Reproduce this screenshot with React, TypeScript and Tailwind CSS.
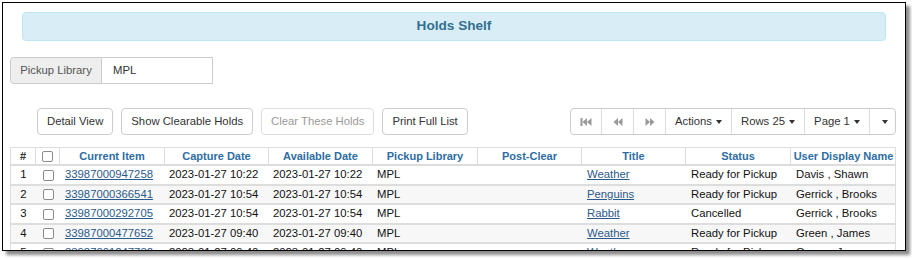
import React from "react";

type Hold = {
  n: number;
  barcode: string;
  capture: string;
  available: string;
  lib: string;
  title: string;
  status: string;
  user: string;
};

const holds: Hold[] = [
  { n: 1, barcode: "33987000947258", capture: "2023-01-27 10:22", available: "2023-01-27 10:22", lib: "MPL", title: "Weather", status: "Ready for Pickup", user: "Davis , Shawn" },
  { n: 2, barcode: "33987000366541", capture: "2023-01-27 10:54", available: "2023-01-27 10:54", lib: "MPL", title: "Penguins", status: "Ready for Pickup", user: "Gerrick , Brooks" },
  { n: 3, barcode: "33987000292705", capture: "2023-01-27 10:54", available: "2023-01-27 10:54", lib: "MPL", title: "Rabbit", status: "Cancelled", user: "Gerrick , Brooks" },
  { n: 4, barcode: "33987000477652", capture: "2023-01-27 09:40", available: "2023-01-27 09:40", lib: "MPL", title: "Weather", status: "Ready for Pickup", user: "Green , James" },
  { n: 5, barcode: "33987001247732", capture: "2023-01-27 09:40", available: "2023-01-27 09:40", lib: "MPL", title: "Weather", status: "Ready for Pickup", user: "Green , James" },
];

const cols = [
  { label: "#", w: "w-[25px]" },
  { label: "", w: "w-[24px]" },
  { label: "Current Item", w: "w-[105px]" },
  { label: "Capture Date", w: "w-[104px]" },
  { label: "Available Date", w: "w-[104px]" },
  { label: "Pickup Library", w: "w-[105px]" },
  { label: "Post-Clear", w: "w-[104px]" },
  { label: "Title", w: "w-[104px]" },
  { label: "Status", w: "w-[105px]" },
  { label: "User Display Name", w: "w-[105px]" },
];

function Box() {
  return <span className="inline-block h-[11px] w-[11px] rounded-[2px] border border-[#8a8a8a] bg-white align-middle" />;
}

function Btn({ children, disabled }: { children: React.ReactNode; disabled?: boolean }) {
  return (
    <button
      className={`h-[27px] rounded-[4px] border bg-white px-[9px] text-[11.3px] ${
        disabled ? "border-[#ddd] text-[#9a9a9a]" : "border-[#ccc] text-[#333]"
      }`}
    >
      {children}
    </button>
  );
}

function Caret() {
  return <span className="ml-[4px] inline-block h-0 w-0 border-x-[3.5px] border-t-[4px] border-x-transparent border-t-[#333] align-middle" />;
}

// pager glyphs: first / prev / next
function PagerIcon({ kind }: { kind: "first" | "prev" | "next" }) {
  return (
    <svg width="12" height="10" viewBox="0 0 12 10" fill="#999">
      {kind === "first" && (
        <>
          <rect x="0.5" y="1" width="2" height="8" />
          <polygon points="7,1 7,9 2.5,5" />
          <polygon points="11.5,1 11.5,9 7,5" />
        </>
      )}
      {kind === "prev" && (
        <>
          <polygon points="6,1 6,9 1.5,5" />
          <polygon points="10.5,1 10.5,9 6,5" />
        </>
      )}
      {kind === "next" && (
        <>
          <polygon points="1.5,1 1.5,9 6,5" />
          <polygon points="6,1 6,9 10.5,5" />
        </>
      )}
    </svg>
  );
}

export default function App() {
  return (
    <div className="h-[259px] w-[912px] overflow-hidden bg-white font-['Liberation_Sans',Arial,sans-serif]">
      <div className="ml-[2px] mt-[2px] h-[249px] w-[904px] overflow-hidden border border-black bg-white shadow-[4px_4px_3px_rgba(0,0,0,0.45)]">
        <div className="px-[7px] pt-[9px]">
          <div className="mx-[12px] flex h-[29px] items-center justify-center rounded-[4px] border border-[#bce8f1] bg-[#d9edf7] text-[13.6px] font-bold text-[#31708f]">
            Holds Shelf
          </div>

          <div className="mt-[16px] flex h-[27px] w-[203px] text-[11.3px]">
            <span className="flex w-[92px] items-center justify-center rounded-l-[4px] border border-[#ccc] bg-[#eee] text-[#555]">
              Pickup Library
            </span>
            <span className="flex flex-1 items-center border border-l-0 border-[#ccc] px-[11px] text-[#333]">MPL</span>
          </div>

          <div className="mt-[24px] flex items-center">
            <div className="ml-[27px] flex gap-[8px]">
              <Btn>Detail View</Btn>
              <Btn>Show Clearable Holds</Btn>
              <Btn disabled>Clear These Holds</Btn>
              <Btn>Print Full List</Btn>
            </div>
            <div className="ml-auto mr-[2px] flex h-[27px] rounded-[4px] border border-[#ccc] text-[11.3px] text-[#333]">
              <span className="flex w-[31px] items-center justify-center border-r border-[#ddd]"><PagerIcon kind="first" /></span>
              <span className="flex w-[32px] items-center justify-center border-r border-[#ddd]"><PagerIcon kind="prev" /></span>
              <span className="flex w-[32px] items-center justify-center border-r border-[#ddd]"><PagerIcon kind="next" /></span>
              <span className="flex w-[66px] items-center justify-center border-r border-[#ddd]">Actions<Caret /></span>
              <span className="flex w-[73px] items-center justify-center border-r border-[#ddd]">Rows 25<Caret /></span>
              <span className="flex w-[65px] items-center justify-center border-r border-[#ddd]">Page 1<Caret /></span>
              <span className="flex w-[25px] items-center justify-center"><Caret /></span>
            </div>
          </div>

          <div className="mt-[12px] w-[886px] border-x border-t border-[#ddd] text-[11.3px]">
            <div className="flex h-[18px] border-b-2 border-[#ddd] text-[11px] font-bold text-[#2e6da4]">
              {cols.map((c, i) => (
                <div
                  key={i}
                  className={`${c.w} flex shrink-0 items-center justify-center whitespace-nowrap border-[#ddd] ${i < cols.length - 1 ? "border-r" : ""} ${i === 0 ? "text-[#333]" : ""}`}
                >
                  {i === 1 ? <Box /> : c.label}
                </div>
              ))}
            </div>
            {holds.map((h, r) => (
              <div
                key={h.n}
                className={`flex h-[19.5px] items-center whitespace-nowrap border-b-2 border-[#ddd] text-[#111] ${r % 2 ? "bg-[#f7f7f7]" : "bg-white"}`}
              >
                <div className="w-[25px] shrink-0 text-center">{h.n}</div>
                <div className="w-[24px] shrink-0 text-center"><Box /></div>
                <div className="w-[105px] shrink-0 pl-[5px]">
                  <a className="text-[#2a5a8c] underline">{h.barcode}</a>
                </div>
                <div className="w-[104px] shrink-0 pl-[4px]">{h.capture}</div>
                <div className="w-[104px] shrink-0 pl-[4px]">{h.available}</div>
                <div className="w-[105px] shrink-0 pl-[4px]">{h.lib}</div>
                <div className="w-[104px] shrink-0" />
                <div className="w-[104px] shrink-0 pl-[5px]">
                  <a className="text-[#2a5a8c] underline">{h.title}</a>
                </div>
                <div className="w-[105px] shrink-0 pl-[5px]">{h.status}</div>
                <div className="w-[105px] shrink-0 pl-[5px]">{h.user}</div>
              </div>
            ))}
          </div>
        </div>
      </div>
    </div>
  );
}
